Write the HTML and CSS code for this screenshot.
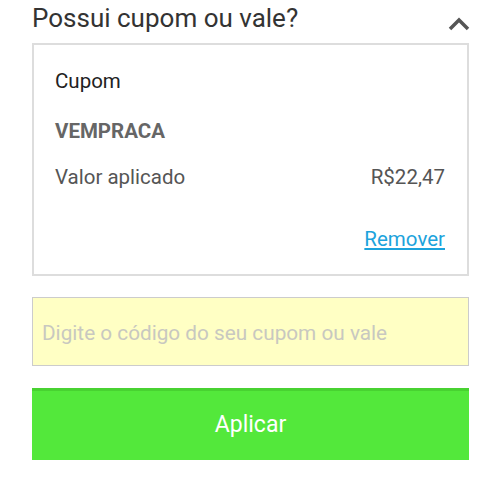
FILE: index.html
```html
<!DOCTYPE html>
<html lang="pt-BR">

<head>
  <meta charset="UTF-8" />
  <meta name="viewport" content="width=device-width, initial-scale=1.0" />
  <title>Cupom</title>
  <link rel="stylesheet" href="styles.css">
</head>

<body>

  <div class="coupon-section">
    <!-- Header -->
    <div class="coupon-header">
      <h2 class="coupon-title">Possui cupom ou vale?</h2>
      <svg class="coupon-toggle" width="24" height="14" viewBox="0 0 24 14" aria-hidden="true">
        <path d="M3 12 L12 3 L21 12" fill="none" stroke="#555" stroke-width="3.5" />
      </svg>
    </div>

    <!-- Applied coupon -->
    <div class="coupon-card">
      <div class="coupon-label">Cupom</div>
      <div class="coupon-code">VEMPRACA</div>
      <div class="coupon-row">
        <span>Valor aplicado</span>
        <span>R$22,47</span>
      </div>
      <div class="coupon-actions">
        <a href="#" class="coupon-remove">Remover</a>
      </div>
    </div>

    <input class="coupon-input" type="text" placeholder="Digite o código do seu cupom ou vale" />

    <button class="coupon-apply">Aplicar</button>
  </div>

</body>

</html>
```

FILE: styles.css
```css
* {
  margin: 0;
  padding: 0;
  box-sizing: border-box;
}

body {
  font-family: Roboto, "Liberation Sans", sans-serif;
  background-color: #fff;
}

.coupon-section {
  padding: 0 31px 0 32px;
}

.coupon-header {
  display: flex;
  justify-content: space-between;
  align-items: flex-start;
  padding: 3px 0 10px;
}

.coupon-title {
  font-size: 26px;
  font-weight: normal;
  line-height: 30px;
  color: #333;
}

.coupon-toggle {
  margin-top: 14px;
  margin-right: -2px;
}

.coupon-card {
  border: 2px solid #ddd;
  height: 233px;
  padding: 24px 22px 0 21px;
  font-size: 20.5px;
  line-height: 25px;
}

.coupon-label {
  color: #222;
}

.coupon-code {
  margin-top: 25px;
  font-weight: bold;
  color: #666;
}

.coupon-row {
  display: flex;
  justify-content: space-between;
  margin-top: 21px;
  color: #555;
}

.coupon-actions {
  display: flex;
  justify-content: flex-end;
  margin-top: 37px;
}

.coupon-remove {
  color: #1ca3dc;
  text-decoration: underline;
}

.coupon-input {
  display: block;
  width: 100%;
  height: 69px;
  margin-top: 21px;
  padding: 3px 9px 0;
  border: 1px solid #ccc;
  background: #ffffc4;
  font-family: inherit;
  font-size: 20.75px;
  color: #333;
  outline: none;
}

.coupon-input::placeholder {
  color: #c8c8c0;
}

.coupon-apply {
  display: block;
  width: 100%;
  height: 72px;
  margin-top: 22px;
  border: none;
  background: #53e83b;
  box-shadow: inset 0 3px 0 #48d231;
  color: #fff;
  font-family: inherit;
  font-size: 23px;
  cursor: pointer;
}
```
